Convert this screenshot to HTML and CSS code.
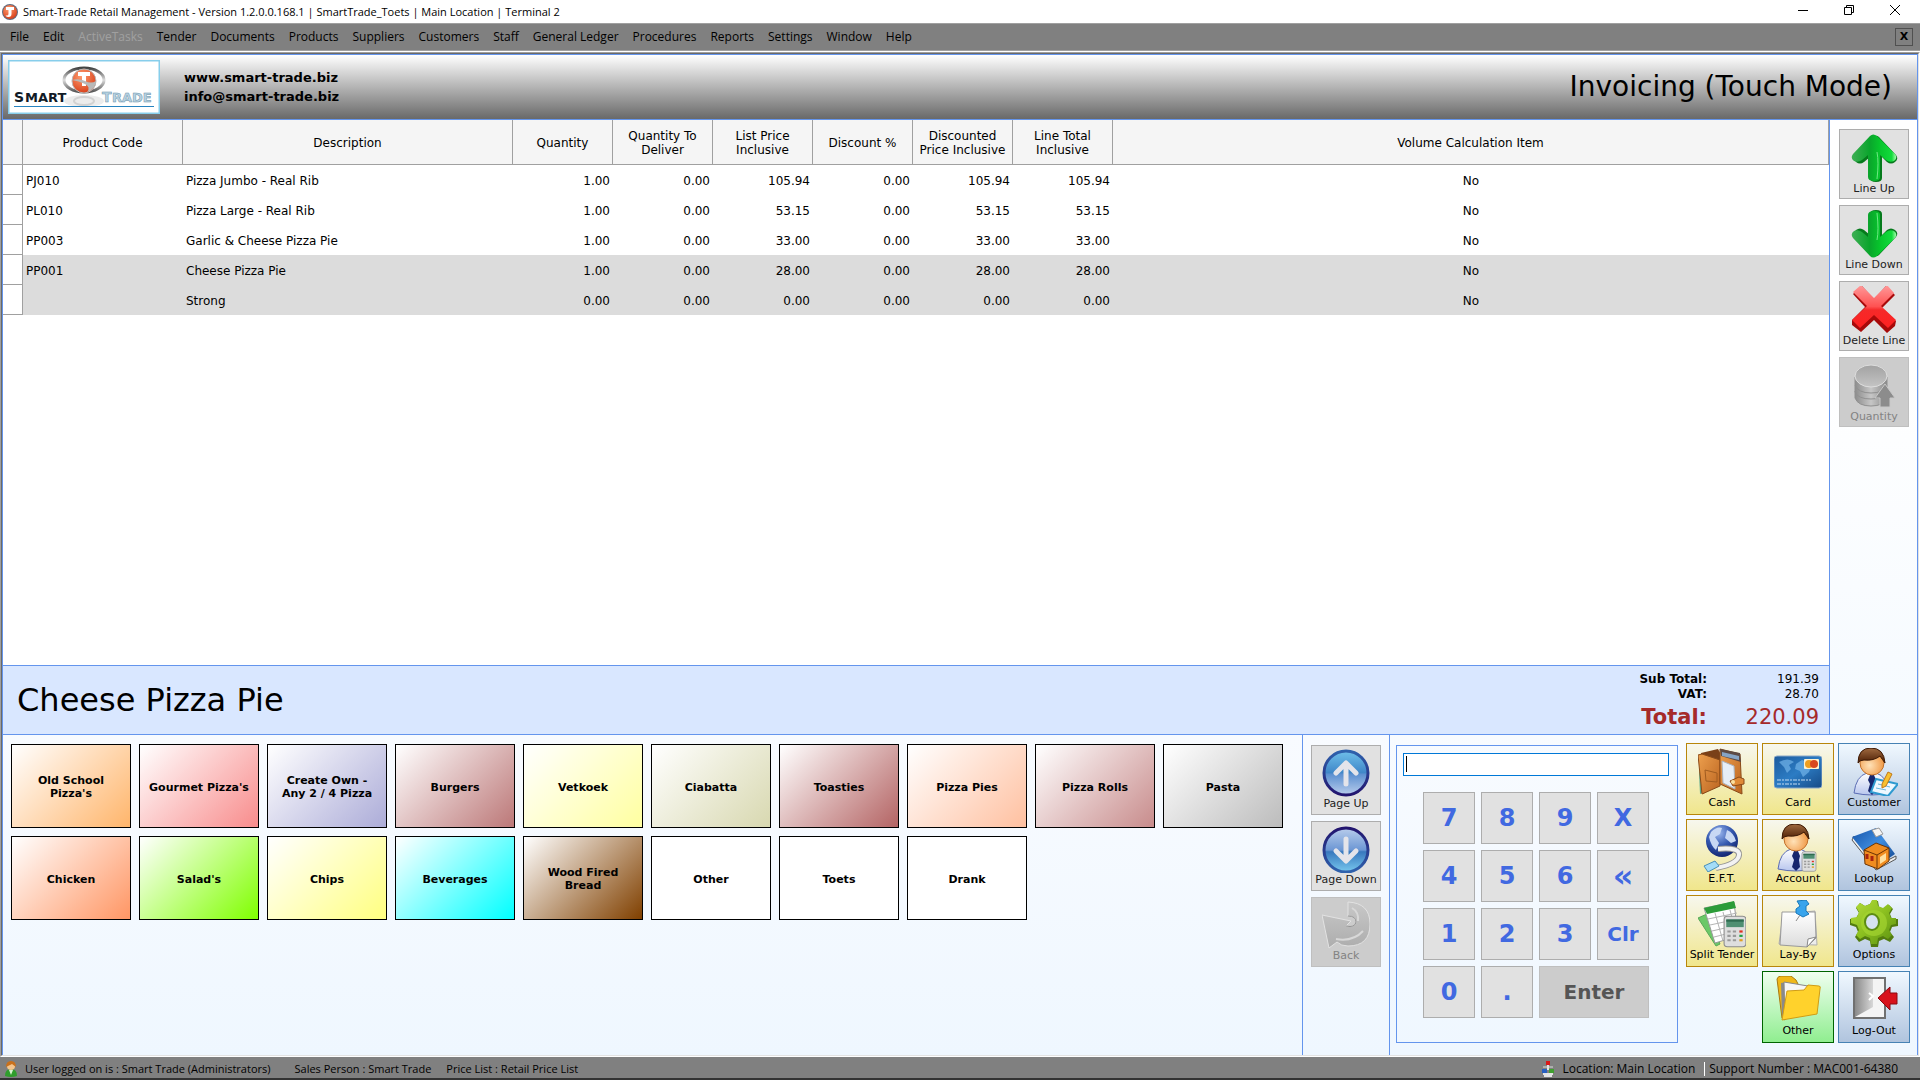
FILE: index.html
```html
<!DOCTYPE html>
<html lang="en">
<head>
<meta charset="utf-8">
<title>Smart-Trade Retail Management</title>
<link rel="stylesheet" href="styles.css">
</head>
<body>
<svg class="defs" aria-hidden="true">
  <defs>
    <linearGradient id="green" x1="0" x2="1" y1="0" y2="0"><stop offset="0" stop-color="#3fae55"/><stop offset=".4" stop-color="#0aa52c"/><stop offset=".62" stop-color="#07c42c"/><stop offset=".9" stop-color="#12dc3c"/><stop offset="1" stop-color="#a8ffb0"/></linearGradient>
    <linearGradient id="red" x1="0" x2="0" y1="0" y2="1"><stop offset="0" stop-color="#ff9a9a"/><stop offset=".5" stop-color="#ff5252"/><stop offset=".58" stop-color="#f52a2a"/><stop offset="1" stop-color="#ff2020"/></linearGradient>
    <linearGradient id="orb" x1="0" x2="0" y1="0" y2="1"><stop offset="0" stop-color="#6fc0ea"/><stop offset=".5" stop-color="#3f86c8"/><stop offset=".52" stop-color="#5b8fd0"/><stop offset="1" stop-color="#b9cdec"/></linearGradient>
    <linearGradient id="orbDown" x1="0" x2="0" y1="0" y2="1"><stop offset="0" stop-color="#b9cdec"/><stop offset=".5" stop-color="#6c97d4"/><stop offset=".54" stop-color="#3878be"/><stop offset="1" stop-color="#78c8ee"/></linearGradient>
    <linearGradient id="ring" x1="0" x2="0" y1="0" y2="1"><stop offset="0" stop-color="#2f62ad"/><stop offset="1" stop-color="#22146e"/></linearGradient>
    <linearGradient id="ringDown" x1="0" x2="0" y1="0" y2="1"><stop offset="0" stop-color="#22146e"/><stop offset="1" stop-color="#2f62ad"/></linearGradient>
    <linearGradient id="gray" x1="0" x2="0" y1="0" y2="1"><stop offset="0" stop-color="#a2a2a2"/><stop offset="1" stop-color="#c4c4c4"/></linearGradient>
    <linearGradient id="backGray" x1="0" x2="0" y1="0" y2="1"><stop offset="0" stop-color="#c8c8c8"/><stop offset="1" stop-color="#adadad"/></linearGradient>
    <linearGradient id="disk" x1="0" x2="1" y1="0" y2="0"><stop offset="0" stop-color="#8c8c8c"/><stop offset=".5" stop-color="#c6c6c6"/><stop offset="1" stop-color="#8a8a8a"/></linearGradient>
    <linearGradient id="chrome" x1="0" x2="0" y1="0" y2="1"><stop offset="0" stop-color="#444"/><stop offset=".5" stop-color="#ddd"/><stop offset="1" stop-color="#555"/></linearGradient>
    <radialGradient id="ball" cx=".4" cy=".3" r=".7"><stop offset="0" stop-color="#ff9d70"/><stop offset="1" stop-color="#d9421c"/></radialGradient>
    <linearGradient id="leather" x1="0" x2="1" y1="0" y2="1"><stop offset="0" stop-color="#eda04e"/><stop offset="1" stop-color="#bb6420"/></linearGradient>
    <linearGradient id="cardBlue" x1="0" x2="1" y1="0" y2="1"><stop offset="0" stop-color="#1c5a9c"/><stop offset=".5" stop-color="#2c7cc4"/><stop offset="1" stop-color="#164a86"/></linearGradient>
    <radialGradient id="face" cx=".4" cy=".6" r=".6"><stop offset="0" stop-color="#ffe2b8"/><stop offset="1" stop-color="#f09a48"/></radialGradient>
    <linearGradient id="hair" x1="0" x2="0" y1="0" y2="1"><stop offset="0" stop-color="#a06a40"/><stop offset="1" stop-color="#4c1e04"/></linearGradient>
    <linearGradient id="shirt" x1="0" x2="0" y1="0" y2="1"><stop offset="0" stop-color="#fff"/><stop offset="1" stop-color="#b8c6ee"/></linearGradient>
    <radialGradient id="globe" cx=".4" cy=".25" r=".8"><stop offset="0" stop-color="#9cb8ee"/><stop offset=".5" stop-color="#3458b0"/><stop offset="1" stop-color="#10206a"/></radialGradient>
    <linearGradient id="book" x1="0" x2="1" y1="0" y2="1"><stop offset="0" stop-color="#1553a8"/><stop offset=".5" stop-color="#3f8de0"/><stop offset="1" stop-color="#0c3c84"/></linearGradient>
    <linearGradient id="gear" x1="0" x2="1" y1="0" y2="1"><stop offset="0" stop-color="#b4dc3c"/><stop offset=".5" stop-color="#8cc020"/><stop offset="1" stop-color="#5a9010"/></linearGradient>
    <linearGradient id="paper" x1="0" x2="0" y1="0" y2="1"><stop offset="0" stop-color="#fff"/><stop offset="1" stop-color="#dcdcdc"/></linearGradient>
    <linearGradient id="door" x1="0" x2="1" y1="0" y2="0"><stop offset="0" stop-color="#8a8a8a"/><stop offset="1" stop-color="#d8d8d8"/></linearGradient>
    <symbol id="arrowUp" viewBox="0 0 48 48">
      <path d="M23 1q3-1 5 1l17 18q3 4-1 7-4 3-8 0l-5-5v21q0 4-6 4t-6-4V22l-6 5q-4 3-8 0-4-4 0-8z" fill="#067a1c" transform="translate(1 1)"/>
      <path d="M20 2q3-3 7 0l18 18q3 4-1 7-4 2-8-1l-6-5v22q0 4-6 4t-6-4V21l-6 5q-4 3-8 1-4-3-1-7z" fill="url(#green)"/>
      <path d="M27 18q2 10 0 27" stroke="#6fe985" stroke-width="1" fill="none"/>
    </symbol>
    <symbol id="person" viewBox="0 0 48 48">
      <path d="M4 45Q6 28 17 25h9q11 3 13 20-17 4-35 0z" fill="url(#shirt)" stroke="#5a6cb4"/>
      <path d="M20 27h4l2 5-1 4 1 7-4 4-4-4 2-7-2-4z" fill="#16266e"/>
      <circle cx="22" cy="15" r="12" fill="url(#face)" stroke="#c0702c"/>
      <path d="M8 15Q8 0 21 0t14 15q-3-4-5-7-6 5-16 4-4 0-6 3z" fill="url(#hair)" stroke="#3c1804"/>
    </symbol>
    <symbol id="calc" viewBox="0 0 22 30">
      <rect x="1" y="1" width="20" height="28" rx="3" fill="#dedede" stroke="#8c8c8c"/>
      <rect x="3" y="4" width="16" height="7" fill="#4f8f72"/><rect x="3" y="4" width="16" height="2" fill="#2f6b50"/>
      <path d="M4 15h3m2 0h3M4 19h3m2 0h3M4 23h3m2 0h3" stroke="#9a9a9a" stroke-width="2"/>
      <path d="M15 15h3" stroke="#e03020" stroke-width="2"/><path d="M15 19h3" stroke="#20a040" stroke-width="2"/><path d="M15 23h3" stroke="#e0a020" stroke-width="2"/>
    </symbol>
  </defs>
</svg>

<header class="titlebar">
  <svg class="app-icon" viewBox="0 0 16 16"><circle cx="8" cy="8" r="8" fill="#5d6b80"/><circle cx="8" cy="8" r="7" fill="url(#ball)"/><path d="M4 3h8v3H9.500v4q0 3-3 3-2 0-3-1.500 3 .5 3-1.500V6H4z" fill="#fff"/></svg>
  <h1 class="title">Smart-Trade Retail Management - Version 1.2.0.0.168.1 | SmartTrade_Toets | Main Location | Terminal 2</h1>
  <div class="win-buttons">
    <button type="button" aria-label="Minimize"><svg viewBox="0 0 10 10"><path d="M0 5.500h10" stroke="#000"/></svg></button>
    <button type="button" aria-label="Restore"><svg viewBox="0 0 10 10"><path d="M.5 2.500h7v7h-7zM2.500 2.500v-2h7v7h-2" fill="none" stroke="#000"/></svg></button>
    <button type="button" aria-label="Close"><svg viewBox="0 0 10 10"><path d="M0 0l10 10M10 0L0 10" stroke="#000"/></svg></button>
  </div>
</header>

<nav class="menubar">
  <button type="button">File</button><button type="button">Edit</button><button type="button" disabled>ActiveTasks</button><button type="button">Tender</button><button type="button">Documents</button><button type="button">Products</button><button type="button">Suppliers</button><button type="button">Customers</button><button type="button">Staff</button><button type="button">General Ledger</button><button type="button">Procedures</button><button type="button">Reports</button><button type="button">Settings</button><button type="button">Window</button><button type="button">Help</button>
  <button type="button" class="close-child">X</button>
</nav>

<div class="client-edge">
<main class="window">
  <header class="banner">
    <svg class="logo" viewBox="0 0 152 54" role="img" aria-label="Smart Trade">
      <rect x=".5" y=".5" width="151" height="53" fill="#fff" stroke="#87ceeb" stroke-width="2"/>
      <ellipse cx="76" cy="41" rx="20" ry="6" fill="#ececec"/><ellipse cx="76" cy="41" rx="10" ry="4" fill="none" stroke="#d2d2d2" stroke-width="2"/>
      <ellipse cx="76" cy="20" rx="20" ry="12" fill="none" stroke="url(#chrome)" stroke-width="3"/>
      <circle cx="76" cy="21" r="12" fill="url(#ball)" stroke="#b8b8b8"/>
      <path d="M70 12h12v4h-4v10h-4V16h-4z" fill="#fff"/>
      <path d="M64 20q7-2 13 1t11 0q-1 9-9 11 4-5-2-8t-13-4z" fill="#b9b9b9"/>
      <g class="logo-name"><text x="6" y="42" fill="#111a26" font-size="14">S</text><text x="17" y="42" fill="#111a26" font-size="13">MART</text><text x="94" y="42" fill="#b9d3e2" stroke="#6b93ac" stroke-width=".5" font-size="14">T</text><text x="104" y="42" fill="#b9d3e2" stroke="#6b93ac" stroke-width=".5" font-size="13">RADE</text></g>
      <path d="M6 46.500h140" stroke="#2683c0"/>
    </svg>
    <p class="contact">www.smart-trade.biz<br>info@smart-trade.biz</p>
    <h2 class="mode">Invoicing (Touch Mode)</h2>
  </header>

  <section class="upper">
    <div class="order">
      <div class="lines">
        <table>
          <colgroup><col class="c-mark"><col class="c-code"><col class="c-desc"><col class="c-num"><col class="c-num"><col class="c-num"><col class="c-num"><col class="c-num"><col class="c-num"><col></colgroup>
          <thead><tr><th></th><th>Product Code</th><th>Description</th><th>Quantity</th><th>Quantity To Deliver</th><th>List Price Inclusive</th><th>Discount %</th><th>Discounted Price Inclusive</th><th>Line Total Inclusive</th><th>Volume Calculation Item</th></tr></thead>
          <tbody>
            <tr><td></td><td>PJ010</td><td>Pizza Jumbo - Real Rib</td><td>1.00</td><td>0.00</td><td>105.94</td><td>0.00</td><td>105.94</td><td>105.94</td><td>No</td></tr>
            <tr><td></td><td>PL010</td><td>Pizza Large - Real Rib</td><td>1.00</td><td>0.00</td><td>53.15</td><td>0.00</td><td>53.15</td><td>53.15</td><td>No</td></tr>
            <tr><td></td><td>PP003</td><td>Garlic &amp; Cheese Pizza Pie</td><td>1.00</td><td>0.00</td><td>33.00</td><td>0.00</td><td>33.00</td><td>33.00</td><td>No</td></tr>
            <tr class="selected"><td></td><td>PP001</td><td>Cheese Pizza Pie</td><td>1.00</td><td>0.00</td><td>28.00</td><td>0.00</td><td>28.00</td><td>28.00</td><td>No</td></tr>
            <tr class="selected"><td></td><td></td><td>Strong</td><td>0.00</td><td>0.00</td><td>0.00</td><td>0.00</td><td>0.00</td><td>0.00</td><td>No</td></tr>
          </tbody>
        </table>
      </div>
      <div class="summary">
        <p class="current">Cheese Pizza Pie</p>
        <dl class="totals">
          <dt>Sub Total:</dt><dd>191.39</dd>
          <dt>VAT:</dt><dd>28.70</dd>
          <dt class="grand">Total:</dt><dd class="grand">220.09</dd>
        </dl>
      </div>
    </div>
    <aside class="line-tools">
      <button type="button" class="tool"><svg><use href="#arrowUp"/></svg>Line Up</button>
      <button type="button" class="tool"><svg viewBox="0 0 48 48"><g transform="matrix(1 0 0 -1 0 48)"><use href="#arrowUp" width="48" height="48"/></g></svg>Line Down</button>
      <button type="button" class="tool"><svg viewBox="0 2 48 48"><path d="M3 10l9-8 12 13L36 2l9 9-13 13 14 13-1 5-8 7-13-13-13 12-9-7v-5l13-13z" fill="#a80a0a"/><path d="M3 8l8-7 13 13L37 1l7 8-13 13 15 14-8 8-14-13-14 13-8-8 15-14z" fill="url(#red)"/></svg>Delete Line</button>
      <button type="button" class="tool" disabled><svg viewBox="0 0 48 48"><g fill="url(#disk)" stroke="#909090"><path d="M5 29v7q3 8 16 8t16-8v-7z"/><path d="M5 23v7q3 7 16 7t16-7v-7z"/><path d="M5 15v8q3 8 16 8t16-8v-8z"/></g><ellipse cx="21" cy="14" rx="16" ry="11" fill="url(#gray)" stroke="#dedede"/><path d="M35 22l10 14h-5v9H30v-9h-5z" fill="#8c8c8c" stroke="#c8c8c8"/></svg>Quantity</button>
    </aside>
  </section>

  <section class="lower">
    <div class="categories">
      <button type="button" class="cat peach">Old School Pizza's</button>
      <button type="button" class="cat rose">Gourmet Pizza's</button>
      <button type="button" class="cat lavender">Create Own - Any 2 / 4 Pizza</button>
      <button type="button" class="cat mauve">Burgers</button>
      <button type="button" class="cat cream">Vetkoek</button>
      <button type="button" class="cat olive">Ciabatta</button>
      <button type="button" class="cat wine">Toasties</button>
      <button type="button" class="cat blush">Pizza Pies</button>
      <button type="button" class="cat dusk">Pizza Rolls</button>
      <button type="button" class="cat silver">Pasta</button>
      <button type="button" class="cat salmon">Chicken</button>
      <button type="button" class="cat lime">Salad's</button>
      <button type="button" class="cat lemon">Chips</button>
      <button type="button" class="cat aqua">Beverages</button>
      <button type="button" class="cat brown">Wood Fired Bread</button>
      <button type="button" class="cat">Other</button>
      <button type="button" class="cat">Toets</button>
      <button type="button" class="cat">Drank</button>
    </div>

    <div class="paging">
      <button type="button" class="tool"><svg viewBox="0 0 48 48"><circle cx="24" cy="24" r="22" fill="url(#orb)" stroke="url(#ring)" stroke-width="3"/><path d="M24 35V15M14 24l10-10 10 10" fill="none" stroke="#e4e4ea" stroke-width="5" stroke-linecap="round" stroke-linejoin="round"/></svg>Page Up</button>
      <button type="button" class="tool"><svg viewBox="0 0 48 48"><circle cx="24" cy="25" r="22" fill="url(#orbDown)" stroke="url(#ringDown)" stroke-width="3"/><path d="M24 14v21M14 26l10 10 10-10" fill="none" stroke="#e4e4ea" stroke-width="5" stroke-linecap="round" stroke-linejoin="round"/></svg>Page Down</button>
      <button type="button" class="tool" disabled><svg viewBox="0 0 48 48"><path d="M26 1q22 1 22 22 0 22-22 22-7 0-11-4l-8 6L0 14l29 6-5 5q9 2 10-4 0-6-8-6z" fill="url(#backGray)" stroke="#e2e2e2"/><path d="M14 38q17 3 27-8M30 7q7 4 6 13" stroke="#d8d8d8" stroke-width="2" fill="none"/><path d="M26 15q8 0 8 6-1 6-10 4" stroke="#929292" fill="none"/></svg>Back</button>
    </div>

    <div class="pay">
      <div class="keypad">
        <input class="entry" type="text" aria-label="Entry" autofocus>
        <div class="keys">
          <button type="button">7</button><button type="button">8</button><button type="button">9</button><button type="button">X</button>
          <button type="button">4</button><button type="button">5</button><button type="button">6</button><button type="button" class="erase">«</button>
          <button type="button">1</button><button type="button">2</button><button type="button">3</button><button type="button" class="word">Clr</button>
          <button type="button">0</button><button type="button">.</button><button type="button" class="word enter" disabled>Enter</button>
        </div>
      </div>
      <div class="actions">
        <button type="button" class="tool gold"><svg viewBox="0 0 48 48"><path d="M3 5L20 1l4 7-2 28L5 46z" fill="#7a4018"/><path d="M1 24l4-14 3 33-6 3z" fill="#5cab8c"/><path d="M0 7l4-1 18 6 0 26L4 46z" fill="url(#leather)" stroke="#8a4a18"/><path d="M7 22l12 3v9l-11-1z" fill="none" stroke="#a05c20"/><path d="M22 1l20 5 2 40-22-10z" fill="url(#leather)" stroke="#8a4a18"/><path d="M22 1l20 4 1 9-20-6z" fill="#5c4a44"/><path d="M24 4l17 4v4l-17-4z" fill="#86a4c4"/><path d="M24 13l12 5 1 23-12-6z" fill="#e6eef6" stroke="#aab4c0"/><path d="M32 33l9-4 5 2v5l-11 2z" fill="#e08a38" stroke="#8a4a18"/><circle cx="35" cy="34" r="2" fill="#f8e0a0"/></svg>Cash</button>
        <button type="button" class="tool gold"><svg viewBox="0 0 48 48"><rect x="0" y="8" width="48" height="32" rx="3" fill="url(#cardBlue)" stroke="#8aa8c8"/><path d="M5 14q9-5 15 0l-5 3 2 4-4 4-3-6zM22 16l6-4 10 4-3 8-6 5-3-6-5-2z" fill="#72b4e8" opacity=".7"/><rect x="30" y="11" width="15" height="10" rx="1" fill="#fff3d0"/><circle cx="35" cy="16" r="4" fill="#f0a020"/><circle cx="40" cy="16" r="4" fill="#d84820"/><path d="M3 32h34M3 36h24" stroke="#c4dcf2" stroke-width="1" stroke-dasharray="4 1 2 1"/></svg>Card</button>
        <button type="button" class="tool steel"><svg viewBox="0 0 48 48"><use href="#person" width="48" height="48"/><path d="M26 31l22 5-10 12-17-4z" fill="#eef8ff" stroke="#2e9ad0" stroke-width="2"/><path d="M28 36l12 3m-14 1l10 2" stroke="#6cb8e0"/><path d="M38 24l4 2-6 12-4 2v-4z" fill="#f8c030" stroke="#c07818"/></svg>Customer</button>
        <button type="button" class="tool gold"><svg viewBox="0 0 48 48"><circle cx="24" cy="17" r="16" fill="url(#globe)"/><path d="M13 8q6-6 11-4l-2 6-5 3 4 6-3 7q-5-4-7-13zM29 6q7 3 9 11l-5 2-6-5z" fill="#c8d8f4"/><path d="M20 25q22-2 21 6-1 9-23 13" fill="none" stroke="#949494" stroke-width="6"/><path d="M20 25q22-2 21 6-1 9-23 13" fill="none" stroke="#f2f2f2" stroke-width="4"/><path d="M6 42l11-5 4 5-11 6z" fill="#a4dcf8" stroke="#4a90b8"/></svg>E.F.T.</button>
        <button type="button" class="tool gold"><svg viewBox="0 0 48 48"><use href="#person" width="48" height="48"/><use href="#calc" x="27" y="27" width="16" height="21"/></svg>Account</button>
        <button type="button" class="tool steel"><svg viewBox="0 0 48 48"><path d="M2 16l24 30 20-11v-3L26 42 4 12z" fill="#eee" stroke="#555"/><path d="M2 13L26 4l19 26-19 13z" fill="url(#book)"/><path d="M22 6l7-2 4 6-7 3z" fill="#f4f4f4" stroke="#999"/><path d="M14 26l12-7 13 5v13l-11 8-13-5z" fill="#f08c20" stroke="#6c3404"/><path d="M14 26l13 5 12-7M27 31v13" fill="none" stroke="#6c3404"/><path d="M30 33l6-4v7l-6 4z" fill="#ffe0a0"/><path d="M17 30v5m5-3v5" stroke="#a82410" stroke-width="3"/></svg>Lookup</button>
        <button type="button" class="tool gold"><svg viewBox="0 0 48 48"><path d="M0 18l9-4 13 30-4 2z" fill="#6cc868" stroke="#58a858"/><path d="M6 8l30-6 4 34-23 7z" fill="#fff" stroke="#999"/><path d="M6 8l30-7 2 7L9 14z" fill="#2c9c38"/><path d="M10 19l29-6M12 25l28-6M14 31l26-6M16 37l24-6M17 13l8 28M25 12l7 28M32 10l7 26" stroke="#b4b4b4" stroke-width="1"/><use href="#calc" x="25" y="15" width="24" height="33"/></svg>Split Tender</button>
        <button type="button" class="tool gold"><svg viewBox="0 0 48 48"><path d="M9 14l32-3 2 34-38-1z" fill="#ececec" stroke="#b0b0b0"/><path d="M8 12h33l1 26-9 9-27-2z" fill="url(#paper)" stroke="#9a9a9a"/><path d="M42 37l-9 10 1-8z" fill="#fff" stroke="#8a8a8a"/><path d="M23 1l9-1 3 4-3 2v5l3 3-6 3-7-4v-4l4-3z" fill="#38a4ec" stroke="#1878b8"/><path d="M26 15l-4 6" stroke="#888"/></svg>Lay-By</button>
        <button type="button" class="tool steel"><svg viewBox="0 0 48 48"><path d="M22 1h6l1 6 5 2 5-4 4 4-3 5 2 5h6v7l-6 1-2 5 4 5-4 5-6-3-5 2-1 6h-7l-1-6-5-2-6 3-4-5 3-5-2-5-6-2v-6l6-1 3-5-3-5 4-5 5 3 5-2z" fill="#527c10"/><path d="M22 0h5l1 6 5 2 5-4 4 4-3 5 2 5h5v6l-5 1-2 5 3 5-4 4-5-3-5 2-1 6h-6l-1-6-5-2-5 3-4-4 3-5-2-5-6-2v-5l6-1 2-5-3-5 4-4 5 3 5-2z" fill="url(#gear)"/><circle cx="24" cy="23" r="13" fill="#a4d430" opacity=".7"/><ellipse cx="22" cy="22" rx="7" ry="8" fill="#d6e2f0" stroke="#5c8c14" stroke-width="2"/></svg>Options</button>
        <button type="button" class="tool mint"><svg viewBox="0 0 48 48"><path d="M3 3q1-3 4-3h10l5 4 3 6-14 34-3-2z" fill="#f0b818" stroke="#a87810"/><path d="M7 7l6-1-2 38-3-1z" fill="#8a8a8a"/><path d="M10 6l24 4 4 4-27 30z" fill="#f6f6f6" stroke="#888"/><path d="M13 15l17-1 4-5 11 1q2 0 1 3l-3 25L8 44z" fill="#ffd22c" stroke="#d09c14"/></svg>Other</button>
        <button type="button" class="tool steel"><svg viewBox="0 0 48 48"><rect x="4" y="2" width="31" height="40" fill="#f4f4f4" stroke="#707070" stroke-width="2"/><path d="M5 3h18v28L5 41z" fill="url(#door)"/><path d="M19 17l4 3-4 4" fill="none" stroke="#fff" stroke-width="2"/><path d="M28 22l12-11v6h7v11h-7v6z" fill="#d8121c" stroke="#8c0810"/></svg>Log-Out</button>
      </div>
    </div>
  </section>
</main>
</div>

<footer class="status">
  <svg class="status-icon" viewBox="0 0 14 16"><path d="M1 15q0-7 6-7t6 7q-6 2-12 0z" fill="#2f9e2c"/><path d="M5 9h4l-2 5z" fill="#d8f4d0"/><circle cx="7" cy="5" r="4" fill="#f4c48c"/><path d="M2 6q0-6 5-6t5 6L8 3z" fill="#c8701c"/></svg>
  <span class="who">User logged on is : Smart Trade (Administrators)</span>
  <span class="seller">Sales Person : Smart Trade</span>
  <span>Price List : Retail Price List</span>
  <span class="spot"><svg class="status-icon" viewBox="0 0 14 16"><path d="M7 4v5M2 13h10M3 15h8" stroke="#e4e4e4" stroke-width="2"/><rect x="5" y="0" width="4" height="4" fill="#d81818"/><path d="M2 6h10" stroke="#ddd"/><rect x="1" y="8" width="5" height="4" fill="#2860c0"/><rect x="8" y="8" width="5" height="4" fill="#40a030"/></svg>Location: Main Location</span>
  <span class="support">Support Number : MAC001-64380</span>
</footer>
</body>
</html>
```
FILE: styles.css
```css
* { box-sizing: border-box; }

body {
  margin: 0;
  min-height: 100vh;
  display: flex;
  flex-direction: column;
  background: #fff;
  color: #000;
  font: 12px/14px "DejaVu Sans", Verdana, sans-serif;
}

h1, h2, p, dl, dd { margin: 0; font-weight: normal; }
button { font: inherit; color: inherit; padding: 0; margin: 0; }
svg { display: block; flex: none; }
.defs { position: absolute; width: 0; height: 0; }

/* Title bar and menu */
.titlebar, .menubar, .status {
  display: flex;
  align-items: center;
  font-family: "Open Sans", "Segoe UI", sans-serif;
  font-size: 11px;
}
.titlebar { height: 23px; padding: 0 2px; }
.app-icon { width: 16px; height: 16px; }
.title { flex: 1; margin-left: 5px; font-size: 11px; }
.win-buttons { display: flex; height: 20px; align-self: flex-start; }
.win-buttons button { width: 46px; border: 0; background: none; display: grid; place-items: center; }
.win-buttons svg { width: 10px; height: 10px; }

.menubar {
  height: 28px;
  padding: 0 7px 0 3px;
  background: #808080;
  border-top: 1px solid #a0a0a0;
  border-bottom: 1px solid #a0a0a0;
  font-size: 12px;
}
.menubar button { padding: 0 7px; border: 0; background: none; }
.menubar button:disabled { color: #a0a0a0; }
.menubar .close-child {
  width: 18px;
  height: 18px;
  margin-left: auto;
  padding: 0;
  border: 1px solid #505050;
  font: bold 11px/14px "DejaVu Sans", sans-serif;
}

/* Window frame */
.client-edge {
  flex: 1;
  display: flex;
  margin-top: 1px;
  border: 1px solid #a0a0a0;
  border-right-color: #fff;
  border-bottom-color: #fff;
}
.window {
  flex: 1;
  min-width: 0;
  display: flex;
  flex-direction: column;
  border: 1px solid #696969;
  border-right-color: #e3e3e3;
  border-bottom-color: #e3e3e3;
}
.banner, .upper, .lower { border-left: 1px solid #6495ed; border-right: 1px solid #6495ed; }
.banner {
  height: 66px;
  display: flex;
  align-items: center;
  padding: 0 25px 0 5px;
  border-top: 1px solid #6495ed;
  border-bottom: 1px solid #6495ed;
  background: linear-gradient(#fff, #696969);
}
.logo { width: 152px; height: 54px; }
.logo-name { font-family: "DejaVu Sans", sans-serif; font-weight: bold; }
.contact { margin-left: 24px; font-size: 13px; line-height: 19px; font-weight: bold; }
.mode { margin-left: auto; font-size: 28px; line-height: 32px; }

/* Order lines */
.upper {
  flex: 1;
  display: flex;
  border-bottom: 1px solid #6495ed;
}
.order { flex: 1; min-width: 0; display: flex; flex-direction: column; }
.lines { flex: 1; background: #fff; }
table { width: 100%; table-layout: fixed; border-collapse: separate; border-spacing: 0; }
.c-mark { width: 20px; }
.c-code { width: 160px; }
.c-desc { width: 330px; }
.c-num { width: 100px; }
th {
  height: 45px;
  padding: 2px 6px 0;
  font-weight: normal;
  background: #f5f5f5;
  border-right: 1px solid #a0a0a0;
  border-bottom: 1px solid #a0a0a0;
}
td { height: 30px; padding: 2px 3px 0; text-align: right; }
td:nth-child(1) { background: #fff; border-right: 1px solid #a0a0a0; border-bottom: 1px solid #a0a0a0; }
td:nth-child(2), td:nth-child(3) { text-align: left; }
td:last-child { text-align: center; }
.selected td { background: #dcdcdc; }
.selected td:nth-child(1) { background: #fff; }

.summary {
  height: 69px;
  display: flex;
  justify-content: space-between;
  align-items: center;
  padding: 0 10px 0 14px;
  background: #d9e7ff;
  border-top: 1px solid #6495ed;
}
.current { font-size: 32px; line-height: 40px; }
.totals { display: grid; grid-template-columns: auto 112px; padding-top: 4px; text-align: right; line-height: 15px; }
.totals dt { font-weight: bold; }
.totals .grand { font-size: 21px; line-height: 30px; color: #a52a2a; }

.line-tools {
  width: 88px;
  padding: 9px;
  border-left: 1px solid #6495ed;
  background: linear-gradient(#fff, #fff 40%, #f5faff);
}
.line-tools, .paging { display: flex; flex-direction: column; gap: 6px; }

.tool {
  width: 70px;
  height: 70px;
  padding-top: 4px;
  display: flex;
  flex-direction: column;
  align-items: center;
  border: 1px solid #adadad;
  background: #e1e1e1;
  font-size: 11px;
  line-height: 14px;
  white-space: nowrap;
  color: #222;
}
.tool svg { width: 48px; height: 48px; }
.tool:disabled { background: #ccc; border-color: #bfbfbf; color: #838383; }

/* Lower panels */
.lower { height: 320px; display: flex; background: linear-gradient(#f8fbff, #eff7ff); }
.categories {
  flex: 1;
  display: flex;
  flex-wrap: wrap;
  align-content: flex-start;
  gap: 8px;
  padding: 9px 8px;
}
.cat {
  width: 120px;
  height: 84px;
  padding: 2px 6px 0;
  border: 1px solid #000;
  background: #fff linear-gradient(135deg, #fff, var(--tint, #fff));
  font-size: 11px;
  line-height: 13px;
  font-weight: bold;
}
.peach { --tint: #ffb56b; }
.rose { --tint: #f88c8c; }
.lavender { --tint: #acacd8; }
.mauve { --tint: #bc7878; }
.cream { --tint: #ffffa0; }
.olive { --tint: #d8d8b0; }
.wine { --tint: #b46464; }
.blush { --tint: #ffc0a0; }
.dusk { --tint: #c88c8c; }
.silver { --tint: #bcbcbc; }
.salmon { --tint: #ff9664; }
.lime { --tint: #80ff00; }
.lemon { --tint: #ffff80; }
.aqua { --tint: #00ffff; }
.brown { --tint: #804000; }

.paging { width: 87px; padding: 10px 8px; border-left: 1px solid #6495ed; }
.paging .tool { padding-top: 3px; }
.pay { display: flex; gap: 8px; padding: 8px 7px 8px 6px; border-left: 1px solid #6495ed; }
.keypad {
  width: 282px;
  margin: 2px 0 4px;
  padding: 7px 8px 0 6px;
  border: 1px solid #6495ed;
  display: flex;
  flex-direction: column;
  align-items: center;
  gap: 16px;
}
.entry {
  width: 100%;
  height: 23px;
  padding: 0 2px;
  border: 1px solid #0078d7;
  outline: 0;
  background: #fff linear-gradient(#000, #000) 2px 2px / 1px 16px no-repeat;
  caret-color: transparent;
  font: inherit;
}
.keys { display: grid; grid-template-columns: repeat(4, 52px); grid-auto-rows: 52px; gap: 6px; }
.keys button { border: 1px solid #adadad; background: #e1e1e1; color: #4169e1; font-size: 24px; line-height: 28px; font-weight: bold; }
.keys .erase { font-size: 32px; }
.keys .word { font-size: 20px; }
.keys .enter { grid-column: span 2; background: #ccc; border-color: #bfbfbf; color: #555; }

.actions { display: grid; grid-template-columns: repeat(3, 72px); grid-auto-rows: 72px; gap: 4px; }
.actions .tool { width: 72px; height: 72px; color: #000; }
.gold { background: linear-gradient(#f7f7ee, #f0e68c); border-color: #b8860b; }
.steel { background: linear-gradient(#f0f8ff, #b0c4de); border-color: #4682b4; }
.mint { grid-column: 2; background: linear-gradient(#f0fff0, #90ee90); border-color: #006400; }

/* Status bar */
.status {
  height: 23px;
  padding: 2px 22px 0 4px;
  background: #808080;
  border-bottom: 2px solid #333;
}
.status-icon { width: 14px; height: 16px; }
.who { margin-left: 7px; margin-right: 24px; }
.seller { margin-right: 15px; }
.spot, .support { font-size: 12px; }
.spot { margin-left: auto; display: flex; align-items: center; gap: 7px; }
.support { margin-left: 9px; padding-left: 4px; border-left: 1px solid #fff; }
```
